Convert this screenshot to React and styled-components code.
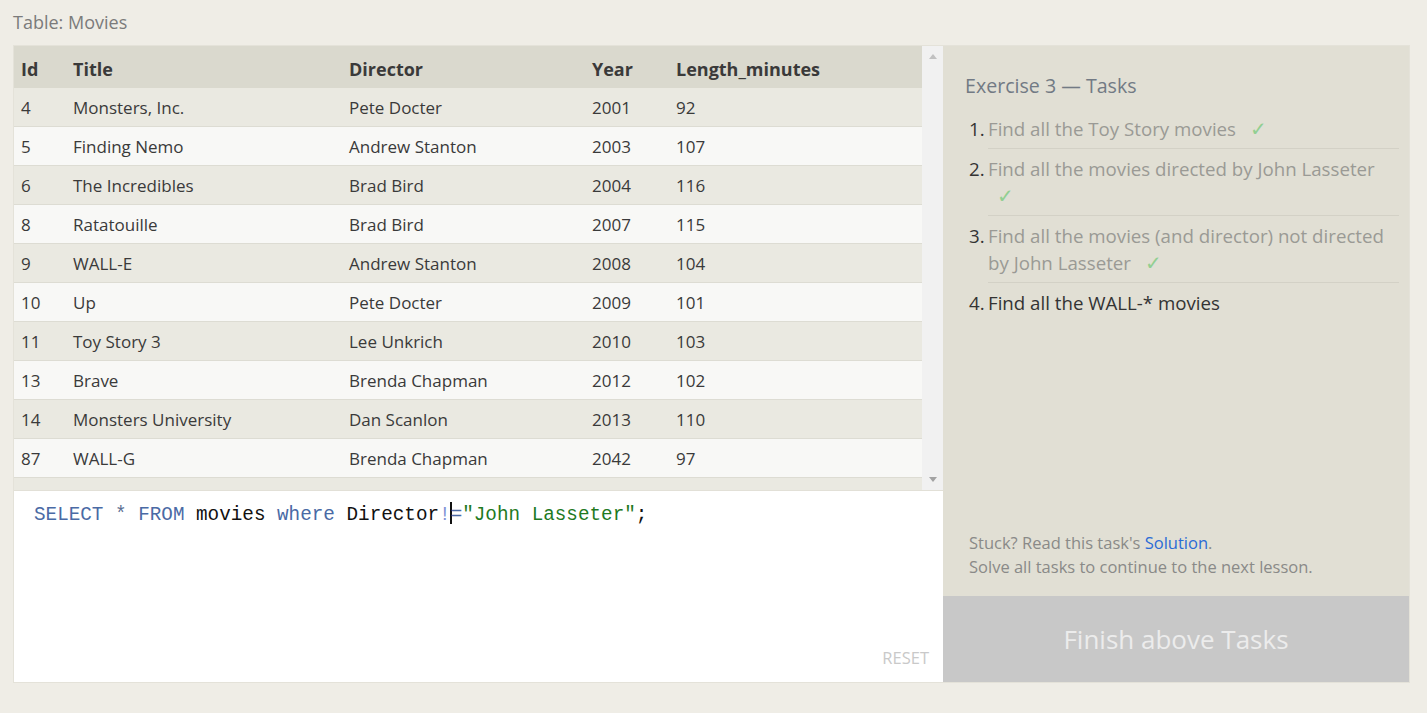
import React from "react";
import styled, { createGlobalStyle } from "styled-components";

const Global = createGlobalStyle`
  html, body { margin: 0; padding: 0; background: #efede6; }
  body { font-family: "Open Sans", "Liberation Sans", sans-serif; }
`;

const Page = styled.div`
  padding: 10px 17px 0 13px;
`;

const Caption = styled.div`
  font-size: 18px;
  color: #7b7b7b;
  line-height: 24px;
  height: 35px;
`;

const Frame = styled.div`
  display: grid;
  grid-template-columns: 929px 1fr;
  border: 1px solid #e4e2d9;
  height: 636px;
`;

const LeftPane = styled.div`
  display: flex;
  flex-direction: column;
  min-width: 0;
`;

const ResultArea = styled.div`
  display: flex;
  height: 444px;
  border-bottom: 1px solid #e2e0d7;
  background: #eae9e1;
`;

const TableWrap = styled.div`
  flex: 1;
  overflow: hidden;
`;

const Table = styled.table`
  width: 100%;
  border-collapse: collapse;
  color: #3a3a3a;
`;

const Th = styled.th`
  text-align: left;
  font-weight: 700;
  font-size: 18px;
  height: 42px;
  padding: 3px 7px 0;
  background: #dad9ce;
  width: ${(p) => p.$w || "auto"};
  box-sizing: border-box;
`;

const Tr = styled.tr`
  background: ${(p) => (p.$odd ? "#eae9e1" : "#f8f8f6")};
  border-bottom: 1px solid #dddcd3;
`;

const Td = styled.td`
  font-size: 17px;
  height: 37px;
  padding: 1px 7px 0;
  white-space: nowrap;
`;

const ScrollTrack = styled.div`
  width: 21px;
  background: #f1f1f1;
  display: flex;
  flex-direction: column;
  justify-content: space-between;
  align-items: center;
  padding: 8px 0 8px;
  box-sizing: border-box;
`;

const Arrow = styled.div`
  width: 0;
  height: 0;
  border-left: 4px solid transparent;
  border-right: 4px solid transparent;
  ${(p) =>
    p.$down
      ? "border-top: 5px solid #a3a3a3;"
      : "border-bottom: 5px solid #c1c1c1;"}
`;

const Editor = styled.div`
  flex: 1;
  background: #ffffff;
  display: flex;
  flex-direction: column;
  justify-content: space-between;
  padding: 11px 14px 13px 20px;
  box-sizing: border-box;
`;

const Code = styled.div`
  font-family: "Liberation Mono", "DejaVu Sans Mono", monospace;
  font-size: 19.3px;
  line-height: 26px;
  color: #111;
`;

const Tok = styled.span`
  color: ${(p) => p.$c};
`;

const Caret = styled.span`
  display: inline-block;
  width: 2px;
  height: 22px;
  background: #111;
  vertical-align: -4px;
  margin: 0 -1px;
`;

const ResetRow = styled.div`
  display: flex;
  justify-content: flex-end;
`;

const Reset = styled.span`
  font-size: 16.5px;
  color: #c9c9c9;
`;

const RightPane = styled.div`
  display: flex;
  flex-direction: column;
`;

const TaskPanel = styled.div`
  flex: 1;
  background: #e1dfd4;
  padding: 26px 10px 17px 22px;
  display: flex;
  flex-direction: column;
  justify-content: space-between;
`;

const Heading = styled.div`
  font-size: 19.6px;
  line-height: 28px;
  color: #727a84;
  margin-bottom: 9px;
`;

const TaskList = styled.ol`
  list-style: none;
  margin: 0;
  padding: 0 0 0 4px;
`;

const TaskItem = styled.li`
  display: flex;
  font-size: 18.7px;
  line-height: 27px;
`;

const Num = styled.span`
  width: 19px;
  flex: none;
  padding-top: 6px;
  color: #333;
`;

const TaskText = styled.span`
  flex: 1;
  padding: 6px 0 6px;
  color: ${(p) => (p.$done ? "#9a9a95" : "#333")};
  border-bottom: ${(p) => (p.$last ? "none" : "1px solid #d3d1c6")};
`;

const Check = styled.span`
  color: #92cf92;
  font-size: 20px;
  margin-left: 9px;
`;

const Footer = styled.div`
  font-size: 16.5px;
  line-height: 24px;
  color: #8a8a88;
  padding-left: 4px;
`;

const Link = styled.a`
  color: #2b6bd6;
  text-decoration: none;
`;

const FinishButton = styled.div`
  height: 86px;
  background: #c8c8c8;
  color: #ececec;
  font-size: 26px;
  display: flex;
  align-items: center;
  justify-content: center;
`;

const rows = [
  [4, "Monsters, Inc.", "Pete Docter", 2001, 92],
  [5, "Finding Nemo", "Andrew Stanton", 2003, 107],
  [6, "The Incredibles", "Brad Bird", 2004, 116],
  [8, "Ratatouille", "Brad Bird", 2007, 115],
  [9, "WALL-E", "Andrew Stanton", 2008, 104],
  [10, "Up", "Pete Docter", 2009, 101],
  [11, "Toy Story 3", "Lee Unkrich", 2010, 103],
  [13, "Brave", "Brenda Chapman", 2012, 102],
  [14, "Monsters University", "Dan Scanlon", 2013, 110],
  [87, "WALL-G", "Brenda Chapman", 2042, 97],
];

const tasks = [
  { t: "Find all the Toy Story movies", done: true },
  { t: "Find all the movies directed by John Lasseter", done: true },
  { t: "Find all the movies (and director) not directed by John Lasseter", done: true },
  { t: "Find all the WALL-* movies", done: false },
];

export default function App() {
  return (
    <>
      <Global />
      <Page>
        <Caption>Table: Movies</Caption>
        <Frame>
          <LeftPane>
            <ResultArea>
              <TableWrap>
                <Table>
                  <thead>
                    <tr>
                      <Th $w="52px">Id</Th>
                      <Th $w="276px">Title</Th>
                      <Th $w="243px">Director</Th>
                      <Th $w="84px">Year</Th>
                      <Th>Length_minutes</Th>
                    </tr>
                  </thead>
                  <tbody>
                    {rows.map((r, i) => (
                      <Tr key={r[0]} $odd={i % 2 === 0}>
                        {r.map((c, j) => (
                          <Td key={j}>{c}</Td>
                        ))}
                      </Tr>
                    ))}
                  </tbody>
                </Table>
              </TableWrap>
              <ScrollTrack>
                <Arrow />
                <Arrow $down />
              </ScrollTrack>
            </ResultArea>
            <Editor>
              <Code>
                <Tok $c="#4a6aa5">SELECT</Tok> <Tok $c="#5b6e93">*</Tok>{" "}
                <Tok $c="#4a6aa5">FROM</Tok> movies <Tok $c="#4a6aa5">where</Tok>{" "}
                Director<Tok $c="#7f93d6">!</Tok>
                <Caret />
                <Tok $c="#4a6aa5">=</Tok>
                <Tok $c="#1f7a1f">"John Lasseter"</Tok>;
              </Code>
              <ResetRow>
                <Reset>RESET</Reset>
              </ResetRow>
            </Editor>
          </LeftPane>
          <RightPane>
            <TaskPanel>
              <div>
                <Heading>Exercise 3 — Tasks</Heading>
                <TaskList>
                  {tasks.map((k, i) => (
                    <TaskItem key={i}>
                      <Num>{i + 1}.</Num>
                      <TaskText $done={k.done} $last={i === tasks.length - 1}>
                        {k.t}
                        {k.done && (
                          <>
                            {" "}
                            <Check>✓</Check>
                          </>
                        )}
                      </TaskText>
                    </TaskItem>
                  ))}
                </TaskList>
              </div>
              <Footer>
                Stuck? Read this task's <Link href="#">Solution</Link>.
                <br />
                Solve all tasks to continue to the next lesson.
              </Footer>
            </TaskPanel>
            <FinishButton>Finish above Tasks</FinishButton>
          </RightPane>
        </Frame>
      </Page>
    </>
  );
}
